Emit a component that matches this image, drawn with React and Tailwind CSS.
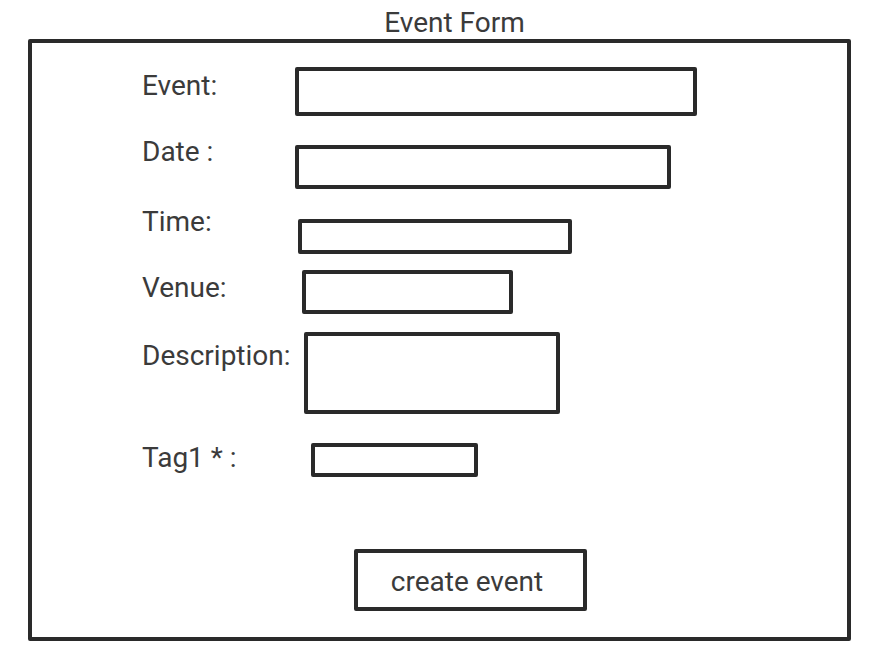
import React from 'react';

const rows = [
  // label, label width, row top gap, label offset, input offset, input size
  { label: 'Event:', lw: 'w-[153px]', row: 'mt-[24px]', lt: 'mt-[3px]', it: 'mt-0', iw: 'w-[402px] h-[49px]' },
  { label: 'Date :', lw: 'w-[153px]', row: 'mt-[20px]', lt: 'mt-0', it: 'mt-[9px]', iw: 'w-[376px] h-[44px]' },
  { label: 'Time:', lw: 'w-[156px]', row: 'mt-[17px]', lt: 'mt-0', it: 'mt-[13px]', iw: 'w-[274px] h-[35px]' },
  { label: 'Venue:', lw: 'w-[160px]', row: 'mt-[16px]', lt: 'mt-[2px]', it: 'mt-0', iw: 'w-[211px] h-[44px]' },
  { label: 'Description:', lw: 'w-[162px]', row: 'mt-[18px]', lt: 'mt-[8px]', it: 'mt-0', iw: 'w-[256px] h-[82px]' },
  { label: 'Tag1 * :', lw: 'w-[169px]', row: 'mt-[28px]', lt: 'mt-0', it: 'mt-[1px]', iw: 'w-[167px] h-[34px]' },
];

function App() {
  return (
    <div className="min-h-screen bg-white text-[#3b3b3b] font-['Roboto',sans-serif] text-[28px] leading-[32px]">
      {/* Title */}
      <h1 className="pt-[7px] pl-[35px] text-center font-normal">Event Form</h1>

      {/* Form box */}
      <div className="ml-[28px] w-[823px] h-[602px] border-4 border-[#2a2a2a] rounded-[2px] flex flex-col">
        {rows.map((r) => (
          <div key={r.label} className={`flex items-start pl-[110px] ${r.row}`}>
            <label className={`${r.lw} ${r.lt} whitespace-nowrap`}>{r.label}</label>
            <div className={`${r.it} ${r.iw} border-4 border-[#2a2a2a] rounded-[2px] bg-white`} />
          </div>
        ))}

        <button className="mt-[72px] ml-[322px] w-[233px] h-[62px] border-4 border-[#2a2a2a] rounded-[2px] pt-[13px] pb-[9px] pr-[7px] text-[28px] leading-[32px] text-[#3b3b3b] bg-white">
          create event
        </button>
      </div>
    </div>
  );
}

export default App;
